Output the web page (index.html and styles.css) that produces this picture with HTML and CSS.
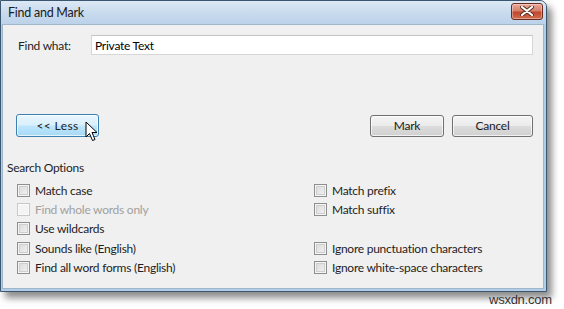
FILE: index.html
```html
<!DOCTYPE html>
<html lang="en">
<head>
  <meta charset="UTF-8">
  <title>Find and Mark</title>
  <link rel="stylesheet" href="styles.css">
</head>
<body>
  <div class="dialog">
    <div class="titlebar">
      <span class="title">Find and Mark</span>
      <button class="close-btn" aria-label="Close">
        <svg width="14" height="10" viewBox="0 0 14 10">
          <path d="M2 1 L12 9 M12 1 L2 9" stroke="#5a3020" stroke-width="4" stroke-linecap="round"/>
          <path d="M2 1 L12 9 M12 1 L2 9" stroke="#fff" stroke-width="2.2" stroke-linecap="round"/>
        </svg>
      </button>
    </div>
    <div class="client">
      <div class="find-row">
        <label class="find-label">Find what:</label>
        <div class="input-field">Private Text</div>
      </div>

      <div class="button-row">
        <div class="btn btn-hover">&lt;&lt; Less
          <svg class="cursor" width="14" height="21" viewBox="0 0 14 21">
            <path d="M1 1 L1 16 L4.5 12.5 L7.5 19.5 L10 18.5 L7 11.5 L12 11.5 Z" fill="#fff" stroke="#000" stroke-width="1" stroke-linejoin="round"/>
          </svg>
        </div>
        <div class="spacer"></div>
        <div class="btn btn-mark">Mark</div>
        <div class="btn btn-cancel">Cancel</div>
      </div>

      <div class="section-title">Search Options</div>

      <div class="options">
        <div class="option"><span class="box"></span>Match case</div>
        <div class="option"><span class="box"></span>Match prefix</div>
        <div class="option disabled"><span class="box"></span>Find whole words only</div>
        <div class="option"><span class="box"></span>Match suffix</div>
        <div class="option"><span class="box"></span>Use wildcards</div>
        <div class="option empty"></div>
        <div class="option"><span class="box"></span>Sounds like (English)</div>
        <div class="option"><span class="box"></span>Ignore punctuation characters</div>
        <div class="option"><span class="box"></span>Find all word forms (English)</div>
        <div class="option"><span class="box"></span>Ignore white-space characters</div>
      </div>
    </div>
  </div>
  <div class="watermark">wsxdn.com</div>
</body>
</html>
```

FILE: styles.css
```css
:root {
  --frame-dark: #3b5670;
  --frame-light: #b4cde6;
  --client-bg: #f0f0f0;
  --text-color: #1e1e1e;
}

body {
  margin: 0;
  padding: 0;
  width: 564px;
  height: 309px;
  background-color: #fff;
  font-family: 'Lato', 'Liberation Sans', sans-serif;
  font-size: 12px;
  letter-spacing: -0.25px;
  color: var(--text-color);
  position: relative;
  overflow: hidden;
}

.dialog {
  width: 547px;
  height: 292px;
  box-sizing: border-box;
  border: 1px solid var(--frame-dark);
  border-radius: 0 7px 0 0;
  background-color: var(--frame-light);
  padding: 0 2px 2px 1px;
  display: flex;
  flex-direction: column;
  box-shadow: 5px 6px 7px rgba(0, 0, 0, 0.45);
}

/* Title bar */
.titlebar {
  height: 23px;
  display: flex;
  align-items: center;
  justify-content: space-between;
  background: linear-gradient(to bottom, #dce8f5 0%, #c9dbee 50%, #bcd2ea 100%);
  margin: 0 -2px 0 -1px;
  padding: 0 3px 0 7px;
  border-radius: 0 6px 0 0;
}

.title {
  font-size: 12.5px;
  color: #1b1b1b;
  margin-top: -1px;
}

.close-btn {
  width: 32px;
  height: 17px;
  margin-top: -3px;
  border: 1px solid #6b2b1f;
  border-radius: 3px;
  background: linear-gradient(to bottom, #e9a99a 0%, #d7806c 45%, #c1462f 55%, #d0704f 100%);
  display: flex;
  align-items: center;
  justify-content: center;
  padding: 0;
  box-shadow: inset 0 0 0 1px rgba(255, 255, 255, 0.35);
}

/* Client area */
.client {
  flex: 1;
  background-color: var(--client-bg);
  border: 1px solid #9fb6cc;
  padding: 10px 10px 0 2px;
}

.find-row {
  display: flex;
  align-items: center;
  padding-left: 13px;
}

.find-label {
  width: 73px;
}

.input-field {
  flex: 1;
  height: 20px;
  box-sizing: border-box;
  border: 1px solid #d6d6d6;
  border-top-color: #c4c4c4;
  background-color: #fff;
  padding: 2px 4px 0 3px;
  color: #000;
}

.button-row {
  display: flex;
  align-items: center;
  margin-top: 59px;
  padding-left: 11px;
  gap: 8px;
}

.spacer {
  flex: 1;
}

.btn {
  height: 22px;
  box-sizing: border-box;
  border: 1px solid #707070;
  border-radius: 3px;
  background: linear-gradient(to bottom, #f4f4f4 0%, #ebebeb 48%, #dcdcdc 52%, #d0d0d0 100%);
  display: flex;
  align-items: center;
  justify-content: center;
  color: #1b1b1b;
  box-shadow: inset 0 0 0 1px rgba(255, 255, 255, 0.7);
}

.btn-hover {
  width: 83px;
  height: 23px;
  border-color: #3c7fb1;
  background: linear-gradient(to bottom, #eaf6fd 0%, #d9f0fc 48%, #bee6fd 52%, #a7d9f5 100%);
  position: relative;
  letter-spacing: 0.4px;
}

.btn-mark {
  width: 74px;
}

.btn-cancel {
  width: 81px;
}

.cursor {
  position: absolute;
  left: 68px;
  top: 6px;
}

.section-title {
  margin-top: 23px;
  padding-left: 2px;
}

.options {
  display: grid;
  grid-template-columns: 297px 1fr;
  grid-auto-rows: 19.2px;
  margin-top: 6px;
  padding-left: 12px;
}

.option {
  display: flex;
  align-items: center;
}

.box {
  width: 13px;
  height: 13px;
  box-sizing: border-box;
  border: 1px solid #8e8f8f;
  background: linear-gradient(135deg, #d8d8d8 0%, #f4f4f4 100%);
  box-shadow: inset 0 0 0 1px #f4f4f4, inset 0 0 0 2px #cfcfcf;
  margin-right: 5px;
}

.option.disabled {
  color: #a0a0a0;
}

.option.disabled .box {
  border-color: #c8c8c8;
  background: #f4f4f4;
  box-shadow: inset 0 0 0 1px #fafafa;
}

.watermark {
  position: absolute;
  left: 489px;
  top: 292px;
  font-family: 'Liberation Sans', sans-serif;
  font-size: 13px;
  color: #333;
}
```
